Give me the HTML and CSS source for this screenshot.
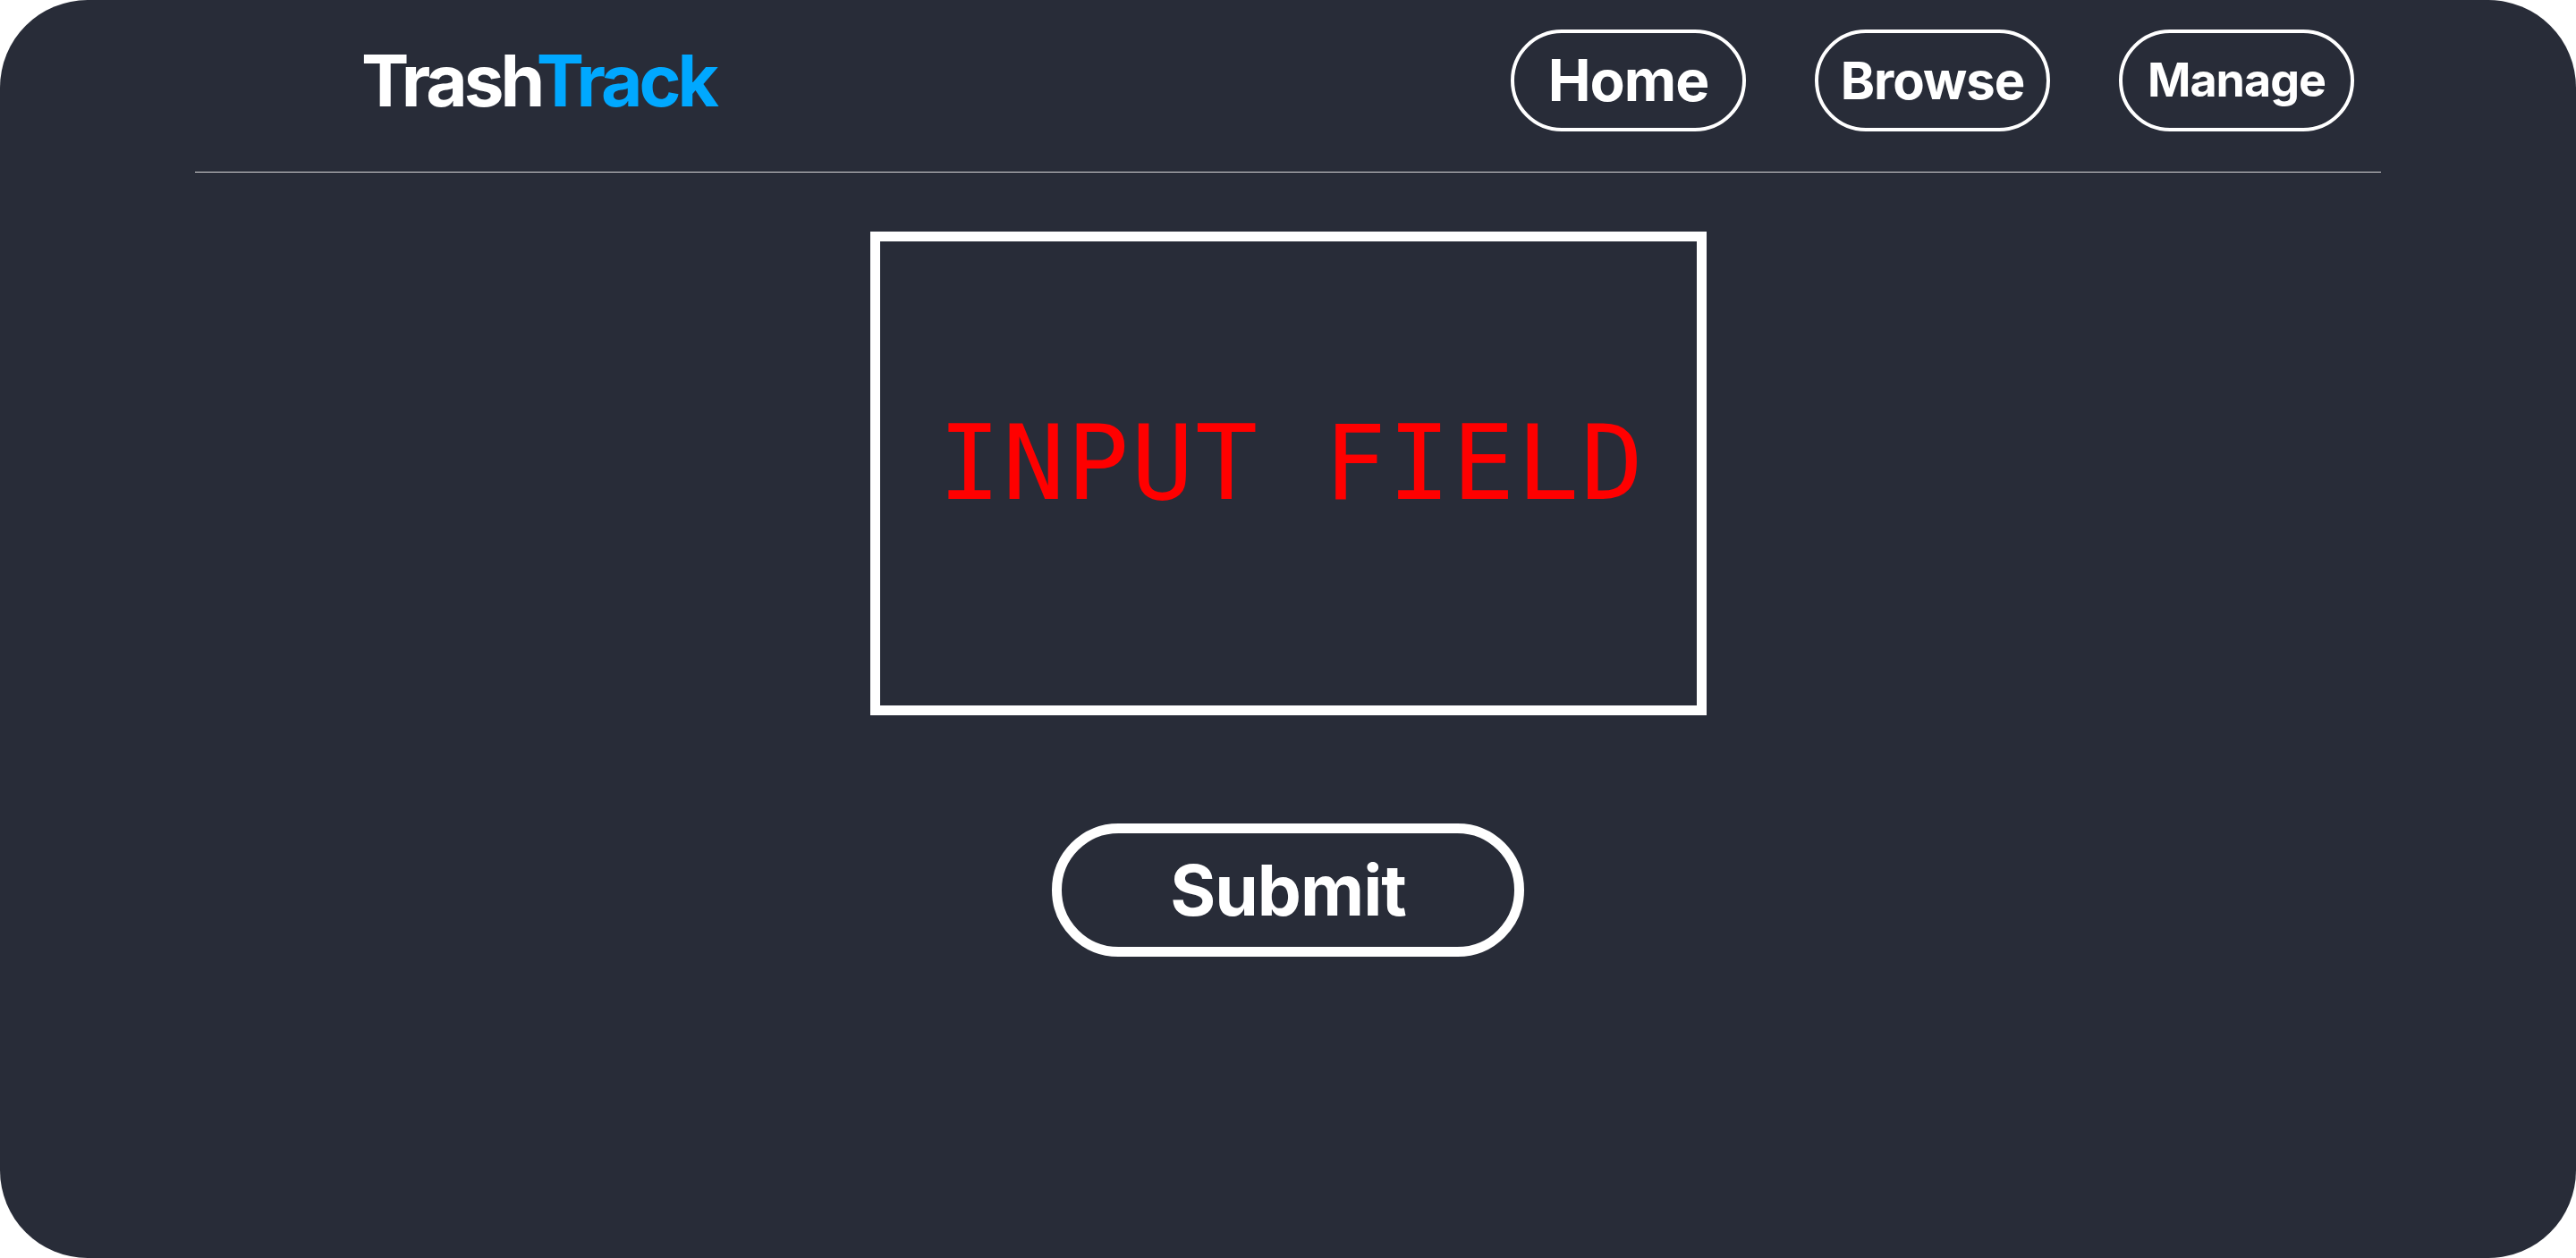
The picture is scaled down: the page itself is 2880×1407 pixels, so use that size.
FILE: index.html
```html
<!DOCTYPE html>
<html lang="en">
<head>
<meta charset="utf-8">
<title>TrashTrack</title>
<link rel="stylesheet" href="styles.css">
</head>
<body>
<div class="page">
  <header class="topbar">
    <div class="logo"><span class="logo-a">Trash</span><span class="logo-b">Track</span></div>
    <nav class="nav">
      <a class="nav-btn nav-home" href="#">Home</a>
      <a class="nav-btn nav-browse" href="#">Browse</a>
      <a class="nav-btn nav-manage" href="#">Manage</a>
    </nav>
  </header>
  <div class="divider"></div>
  <main class="content">
    <div class="input-box"><span class="input-text">INPUT FIELD</span></div>
    <button class="submit" type="button">Submit</button>
  </main>
</div>
</body>
</html>
```
FILE: styles.css
```css
html, body {
  margin: 0;
  padding: 0;
  background: #ffffff;
}

.page {
  height: 1407px;
  background: #282c38;
  border-radius: 98px;
  overflow: hidden;
  font-family: "Inter", "Liberation Sans", sans-serif;
  color: #ffffff;
}

.topbar {
  width: 2444px;
  margin: 0 auto;
  box-sizing: border-box;
  padding: 33px 30px 0 186px;
  display: flex;
  justify-content: space-between;
  align-items: center;
}

.logo {
  font-size: 80px;
  font-weight: 700;
  letter-spacing: -4px;
  line-height: 1;
}

.logo-a { color: #ffffff; }
.logo-b { color: #00a8ff; }

.nav {
  display: flex;
  gap: 77px;
}

.nav-btn {
  width: 263px;
  height: 114px;
  box-sizing: border-box;
  border: 4px solid #ffffff;
  border-radius: 57px;
  display: flex;
  align-items: center;
  justify-content: center;
  color: #ffffff;
  text-decoration: none;
  font-weight: 700;
  line-height: 1;
  letter-spacing: -1px;
}

.nav-home { font-size: 64px; }
.nav-browse { font-size: 58px; }
.nav-manage { font-size: 52px; }

.divider {
  width: 2444px;
  height: 1px;
  margin: 45px auto 0;
  background: #d9d9d9;
}

.content {
  display: flex;
  flex-direction: column;
  align-items: center;
}

.input-box {
  margin-top: 66px;
  width: 935px;
  height: 541px;
  box-sizing: border-box;
  border: 11px solid #ffffff;
  display: flex;
  align-items: center;
  justify-content: center;
  padding-bottom: 24px;
  padding-left: 8px;
}

.input-text {
  font-family: "DejaVu Sans Mono", "Liberation Mono", monospace;
  font-size: 116px;
  letter-spacing: 2px;
  color: #ff0000;
  white-space: pre;
}

.submit {
  margin-top: 121px;
  width: 528px;
  height: 149px;
  box-sizing: border-box;
  border: 11px solid #ffffff;
  border-radius: 75px;
  background: transparent;
  color: #ffffff;
  font-family: "Inter", "Liberation Sans", sans-serif;
  font-weight: 700;
  font-size: 78px;
  line-height: 1;
  letter-spacing: -1px;
  padding: 0;
}
```
